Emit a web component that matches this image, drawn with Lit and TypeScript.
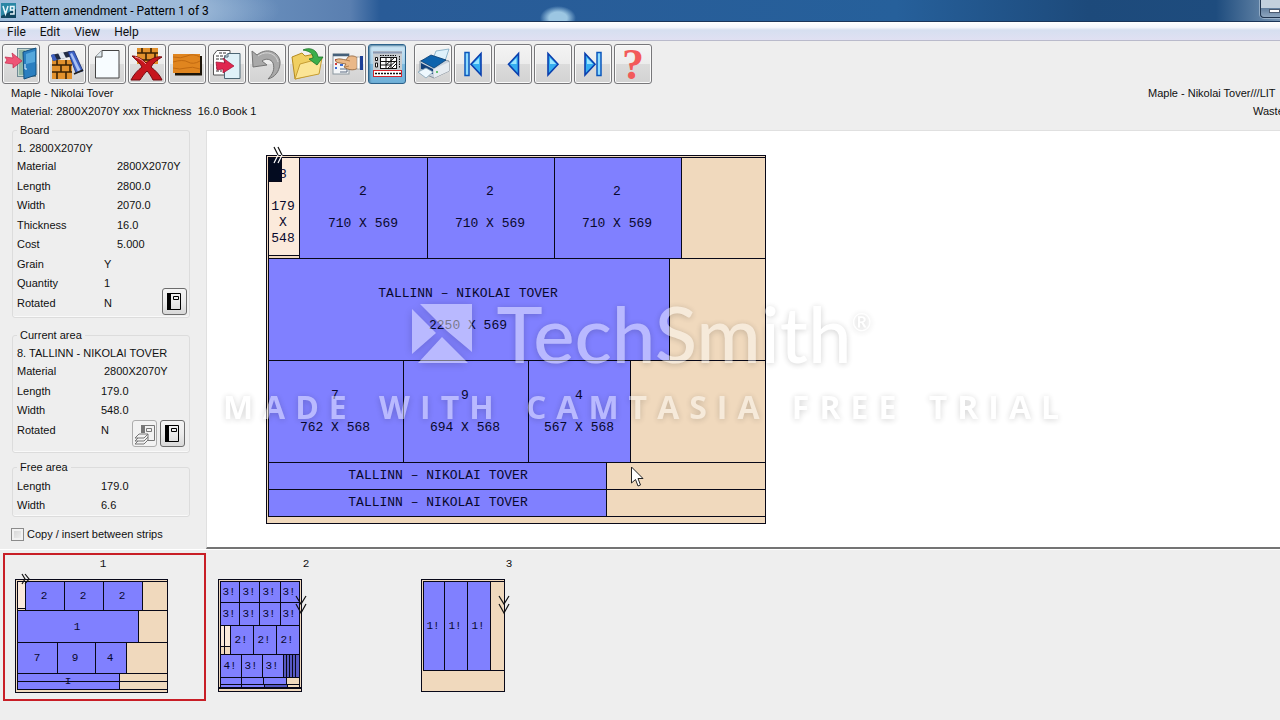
import { LitElement, html, svg, css, nothing } from "lit";
import { customElement, property, state } from "lit/decorators.js";

type Kind = "part" | "waste" | "offcut" | "strip" | "ink";
type Cell = [x: number, y: number, right: number, bottom: number, kind: Kind];
type Caption = [x: number, baseline: number, text: string];

interface Pattern {
  name: string;
  width: number;
  height: number;
  size: number;
  cells: Cell[];
  captions: Caption[];
  saw: string;
}

const detail: Pattern = {
  name: "Cutting pattern 1",
  width: 500,
  height: 369,
  size: 13,
  cells: [
    [0, 0, 499, 368, "waste"],
    [2, 2, 499, 361, "waste"],
    [2, 2, 33, 100, "offcut"],
    [2, 100, 33, 103, "waste"],
    [33, 2, 161, 103, "part"],
    [161, 2, 288, 103, "part"],
    [288, 2, 415, 103, "part"],
    [415, 2, 499, 103, "waste"],
    [2, 103, 403, 205, "part"],
    [403, 103, 499, 205, "waste"],
    [2, 205, 137, 307, "part"],
    [137, 205, 262, 307, "part"],
    [262, 205, 364, 307, "part"],
    [364, 205, 499, 307, "waste"],
    [2, 307, 340, 334, "part"],
    [340, 307, 499, 334, "waste"],
    [2, 334, 340, 361, "part"],
    [340, 334, 499, 361, "waste"],
    [2, 2, 15, 26, "ink"],
  ],
  captions: [
    [17, 23, "8"],
    [17, 55, "179"],
    [17, 71, "X"],
    [17, 87, "548"],
    [97, 40, "2"],
    [97, 72, "710 X 569"],
    [224, 40, "2"],
    [224, 72, "710 X 569"],
    [351, 40, "2"],
    [351, 72, "710 X 569"],
    [202, 142, "TALLINN – NIKOLAI TOVER"],
    [202, 174, "2250 X 569"],
    [69, 244, "7"],
    [69, 276, "762 X 568"],
    [199, 244, "9"],
    [199, 276, "694 X 568"],
    [313, 244, "4"],
    [313, 276, "567 X 568"],
    [172, 324, "TALLINN – NIKOLAI TOVER"],
    [172, 351, "TALLINN – NIKOLAI TOVER"],
  ],
  saw: "M8 -8l4 8M12 -8l4 8",
};

const thumbs: Pattern[] = [
  {
    name: "1",
    width: 153,
    height: 114,
    size: 11,
    cells: [
      [0, 0, 152, 113, "waste"],
      [2, 2, 152, 110, "waste"],
      [2, 2, 10, 29, "offcut"],
      [10, 2, 49, 31, "part"],
      [49, 2, 88, 31, "part"],
      [88, 2, 127, 31, "part"],
      [127, 2, 152, 31, "waste"],
      [2, 31, 123, 63, "part"],
      [123, 31, 152, 63, "waste"],
      [2, 63, 42, 94, "part"],
      [42, 63, 80, 94, "part"],
      [80, 63, 111, 94, "part"],
      [111, 63, 152, 94, "waste"],
      [2, 94, 104, 102, "part"],
      [104, 94, 152, 102, "waste"],
      [2, 102, 104, 110, "part"],
      [104, 102, 152, 110, "waste"],
    ],
    captions: [
      [29, 20, "2"],
      [68, 20, "2"],
      [107, 20, "2"],
      [62, 51, "1"],
      [22, 82, "7"],
      [60, 82, "9"],
      [95, 82, "4"],
      [53, 105, "ɪ"],
    ],
    saw: "M7 -5l3 5l-3 5M10 -5l4 5l-4 5",
  },
  {
    name: "2",
    width: 84,
    height: 113,
    size: 11,
    cells: [
      [0, 0, 83, 112, "waste"],
      [2, 2, 81, 109, "waste"],
      [2, 2, 21, 23, "part"],
      [21, 2, 41, 23, "part"],
      [41, 2, 62, 23, "part"],
      [62, 2, 81, 23, "part"],
      [2, 23, 21, 46, "part"],
      [21, 23, 41, 46, "part"],
      [41, 23, 62, 46, "part"],
      [62, 23, 81, 46, "part"],
      [2, 46, 6, 67, "offcut"],
      [6, 46, 12, 67, "offcut"],
      [2, 67, 6, 75, "waste"],
      [6, 67, 12, 75, "waste"],
      [12, 46, 35, 75, "part"],
      [35, 46, 58, 75, "part"],
      [58, 46, 81, 75, "part"],
      [2, 75, 23, 98, "part"],
      [23, 75, 44, 98, "part"],
      [44, 75, 65, 98, "part"],
      [65, 75, 68, 98, "strip"],
      [68, 75, 71, 98, "strip"],
      [71, 75, 74, 98, "strip"],
      [74, 75, 77, 98, "strip"],
      [77, 75, 81, 98, "strip"],
      [2, 98, 23, 105, "part"],
      [23, 98, 45, 105, "part"],
      [45, 98, 68, 105, "part"],
      [68, 98, 81, 105, "waste"],
      [2, 105, 23, 109, "part"],
      [23, 105, 46, 109, "part"],
      [46, 105, 69, 109, "strip"],
      [0, 108, 83, 109, "ink"],
    ],
    captions: [
      [11, 16, "3!"],
      [31, 16, "3!"],
      [51, 16, "3!"],
      [71, 16, "3!"],
      [11, 38, "3!"],
      [31, 38, "3!"],
      [51, 38, "3!"],
      [71, 38, "3!"],
      [23, 64, "2!"],
      [46, 64, "2!"],
      [69, 64, "2!"],
      [12, 90, "4!"],
      [33, 90, "3!"],
      [54, 90, "3!"],
    ],
    saw: "M78 17l5 8l5 -8M78 25l5 9l5 -9",
  },
  {
    name: "3",
    width: 84,
    height: 113,
    size: 11,
    cells: [
      [0, 0, 83, 112, "waste"],
      [2, 2, 83, 91, "waste"],
      [2, 2, 23, 91, "part"],
      [23, 2, 46, 91, "part"],
      [46, 2, 69, 91, "part"],
    ],
    captions: [
      [12, 50, "1!"],
      [34, 50, "1!"],
      [57, 50, "1!"],
    ],
    saw: "M78 17l5 8l5 -8M78 25l5 9l5 -9",
  },
];

@customElement("pattern-board")
class PatternBoard extends LitElement {
  @property({ attribute: false }) pattern!: Pattern;

  static styles = css`
    :host {
      display: block;
      line-height: 0;
    }
    svg {
      overflow: visible;
    }
    .cell {
      stroke: #080818;
      shape-rendering: crispEdges;
    }
    .part {
      fill: #8080ff;
    }
    .waste {
      fill: #f0d9bd;
    }
    .offcut {
      fill: #fbeadb;
    }
    .strip {
      fill: #5658c4;
    }
    .ink {
      fill: #030b20;
    }
    .caption {
      font-family: "Liberation Mono", monospace;
      text-anchor: middle;
      fill: #08082c;
      white-space: pre;
    }
    .saw {
      fill: none;
      stroke: #111;
      stroke-width: 1.2;
    }
    .light {
      stroke: #fff;
    }
  `;

  render() {
    const p = this.pattern;
    return html`<svg width=${p.width} height=${p.height} role="img" aria-label=${p.name}>
      ${p.cells.map(
        ([x, y, r, b, kind]) =>
          svg`<rect class="cell ${kind}" x=${x + 0.5} y=${y + 0.5} width=${r - x} height=${b - y}></rect>`
      )}
      ${p.captions.map(
        ([x, y, text]) => svg`<text class="caption" x=${x} y=${y} font-size=${p.size}>${text}</text>`
      )}
      <path class="saw" d=${p.saw}></path>
      ${p.size === 13 ? svg`<path class="saw light" d="M12 0l-4 8M16 0l-4 8"></path>` : nothing}
    </svg>`;
  }
}

const bricks = (x: number, y: number, w: number, h: number) => svg`
  <rect x=${x} y=${y} width=${w} height=${h} fill="#e2912d"></rect>
  <path d="M${x} ${y + 5}h${w}M${x} ${y + 12}h${w}M${x + 5} ${y}v5M${x + 14} ${y}v5M${x + 9} ${y + 5}v7M${x + 18} ${y + 5}v7M${x + 5} ${y + 12}v${h - 12}M${x + 14} ${y + 12}v${h - 12}" stroke="#3b2204" stroke-width="1.6" fill="none"></path>`;

const triangle = (d: string, shine: string) => svg`
  <path d=${d} fill="#35aef0" stroke="#0a3fae" stroke-width="1.600"></path>
  <path d=${shine} fill="#9be6ff"></path>`;

const icons: Record<string, unknown> = {
  exit: svg`
    <rect x="15.5" y="4.5" width="18" height="28" fill="#c5d6cd" stroke="#6f8a95"></rect>
    <path d="M17 6h6v25h-6z" fill="#8fb7a6"></path>
    <path d="M21 8L34 4V31L22 35z" fill="#2b7fc0" stroke="#13507f"></path>
    <path d="M24 10L33 7V18L24 20z" fill="#56a8dc"></path>
    <path d="M23 20v5h2" stroke="#e6f4ff" fill="none"></path>
    <path d="M3 13l8 1l-1 -5l10 8l-9 7v-4l-8 -1l2 -3z" fill="#ee5576" stroke="#c22848" stroke-width=".7"></path>`,
  cutting: svg`
    ${bricks(4, 16, 20, 19)}
    <path d="M3 11L22 7L25 12L5 17z" fill="#222c44"></path>
    <path d="M10 9l5 -1l3 6l-5 1z" fill="#dfe6f0"></path>
    <path d="M3 11l3 -1l3 6l-4 1z" fill="#3c5fc0"></path>
    <path d="M20 8L26 7L35 27L28 29z" fill="#3d62c8" stroke="#1b2f70" stroke-width=".8"></path>
    <path d="M24 9L33 27L30 28L22 10z" fill="#a9c1f4"></path>
    <path d="M26 30L35 26" stroke="#202020" stroke-width="1.4"></path>`,
  page: svg`
    <path d="M14 6.500H31V34H7.500V13z" fill="#f7fcff" stroke="#444"></path>
    <path d="M14 6.500V13H7.500" fill="#dfeaf0" stroke="#555"></path>`,
  remove: svg`
    ${bricks(9, 4, 21, 16)}
    <path d="M4 12C9 12 13 14 18 19C24 14 29 12 34 13C29 16 25 19 23 23C28 27 32 31 34 36H25C23 32 21 29 19 27C16 30 14 33 12 36H3C6 30 10 26 14 23C12 19 8 16 4 12z" fill="#c6151d" stroke="#730a10"></path>
    <path d="M7 13C12 14 15 17 18 20" stroke="#f4a0a0" fill="none"></path>`,
  board: svg`
    <rect x="7" y="12" width="27" height="19.500" fill="#1c1408"></rect>
    <rect x="5" y="10" width="27" height="19" fill="#e0851f"></rect>
    <path d="M5 13q8 2 14 -1t13 1M5 18q10 -3 15 0t12 -1M5 24q7 2 13 0t14 1" stroke="#c26a11" fill="none"></path>`,
  copy: svg`
    <path d="M9 6.500H22V31H5.500V11z" fill="#fff" stroke="#555"></path>
    <path d="M11 9h8M8 12h10M8 15h9M8 24h6M8 27h6M8 21h4" stroke="#333" stroke-dasharray="3 1"></path>
    <path d="M20 9.500H32V34.500H16.500V13z" fill="#dff1f8" stroke="#4c6674"></path>
    <path d="M20 9v4h-4" stroke="#4c6674" fill="none"></path>
    <path d="M8 18l9 1l-2 -5l11 8l-11 7v-4l-6 1z" fill="#e0274f" stroke="#9c1234" stroke-width=".7"></path>`,
  undo: svg`
    <path d="M4 7L9 11C20 2 33 9 32 20C31 28 27 33 20 35C25 30 27 25 25 19C23 15 18 14 14 17L19 21L5 23z" fill="#a9a9a9" stroke="#747474"></path>
    <path d="M10 12C18 6 28 9 30 18" stroke="#d8d8d8" fill="none"></path>`,
  open: svg`
    <path d="M4 13L14 9L17 12L27 10L31 29L7 35z" fill="#f0cf62" stroke="#b58b20"></path>
    <path d="M12 20L34 14L31 30L7 35z" fill="#fbe596" stroke="#c69d33"></path>
    <path d="M15 6C21 3 29 5 30 13H35L29 21L21 15L25 14C25 9 21 7 15 6z" fill="#3bae4b" stroke="#1a7227" stroke-width=".8"></path>`,
  pick: svg`
    <rect x="5" y="10" width="16" height="20" fill="#f4f6f8" stroke="#8c98a0"></rect>
    <path d="M5 11h16" stroke="#45607a" stroke-width="2.500"></path>
    <path d="M12 25h7v3h-7" stroke="#5a6a80" fill="none"></path>
    <path d="M7 16h2M7 20h2" stroke="#d23a3a" stroke-width="2"></path>
    <path d="M7 24h2M12 21h3" stroke="#3a6ad2" stroke-width="2"></path>
    <path d="M8 15.500C11 14 15 15.500 18 16L20 13C23 11 27 12 30 14V24C26 27 20 26 16 23L18 20L9 18.500C8 18 7 16.500 8 15.500z" fill="#eab888" stroke="#8a5a30" stroke-width=".8"></path>
    <path d="M18 16l4 1M17 23l4 -1" stroke="#a8713f" stroke-width=".8"></path>
    <path d="M29 13h3v12h-3z" fill="#fff" stroke="#777" stroke-width=".5"></path>
    <path d="M32 12h3v14h-3z" fill="#1d3f96"></path>`,
  layout: svg`
    <rect x="5" y="7" width="29" height="26" fill="#c8ccd0"></rect>
    <path d="M5 8.500h29" stroke="#8b9ab4" stroke-width="2"></path>
    <path d="M12 11.500h16M31.500 12v12" stroke="#111" stroke-dasharray="1.500 1"></path>
    <path d="M7.500 13.500h2v3h-2zM7.500 19h2v4h-2z" fill="#fff" stroke="#111"></path>
    <rect x="12.500" y="13.500" width="16" height="11" fill="#fff" stroke="#111"></rect>
    <path d="M18 13v12M23 13v12M12 17.500h16M12 21h11M18 21l8 -7M20 24l8 -7M24 24l4 -4" stroke="#111"></path>
    <rect x="5.500" y="26.500" width="28" height="6" fill="#fff" stroke="#d3252c"></rect>
    <path d="M7 29.500h26" stroke="#111" stroke-width="1.500" stroke-dasharray="2 1"></path>`,
  print: svg`
    <path d="M22 7L35 5L31 17L19 15z" fill="#dff1fb" stroke="#7ba7c0" stroke-width=".8"></path>
    <path d="M6 17L19 13L35 17V27L20 34L6 28z" fill="#c9d2dc" stroke="#76838f" stroke-width=".8"></path>
    <path d="M7 17L17 11L32 16L20 24z" fill="#0e63ad" stroke="#083d74" stroke-width=".8"></path>
    <path d="M7 19L19 25V30L7 25z" fill="#123f78"></path>
    <path d="M20 25L35 18V27L20 34z" fill="#e6ebf0"></path>
    <path d="M4 28L12 24L19 28L12 34z" fill="#eef8fe" stroke="#86a5b8" stroke-width=".8"></path>
    <circle cx="23" cy="28" r="1" fill="#3ab54a"></circle>`,
  first: svg`<rect x="11" y="8.500" width="4" height="23" fill="#8fdcff" stroke="#0a56bc" stroke-width="1.500"></rect>${triangle("M27 9.500V31L17 20.300z", "M25 14V20H19z")}`,
  previous: triangle("M24.500 9.500V31L14.500 20.300z", "M22.500 14V20H16.500z"),
  next: triangle("M14 9.500V31L24 20.300z", "M16 14V20H22z"),
  last: svg`${triangle("M11 9.500V31L21 20.300z", "M13 14V20H19z")}<rect x="23" y="8.500" width="4" height="23" fill="#8fdcff" stroke="#0a56bc" stroke-width="1.500"></rect>`,
  help: svg`<text class="mark" x="19" y="35" text-anchor="middle">?</text>`,
};

const groups: [string, string][][] = [
  [["exit", "Exit"]],
  [
    ["cutting", "Cutting patterns"],
    ["page", "New"],
    ["remove", "Delete pattern"],
    ["board", "Board"],
    ["copy", "Copy"],
    ["undo", "Undo"],
    ["open", "Open"],
    ["pick", "Select"],
    ["layout", "Thumbnails"],
  ],
  [
    ["print", "Print"],
    ["first", "First pattern"],
    ["previous", "Previous pattern"],
    ["next", "Next pattern"],
    ["last", "Last pattern"],
    ["help", "Help"],
  ],
];

const book = html`<svg width="17" height="20" viewBox="0 0 17 20" aria-hidden="true">
  <path d="M2 1.500h12.500v16H2z" fill="none" stroke="currentColor"></path>
  <path d="M1 1h4v17h-4z" fill="currentColor"></path>
  <path d="M7.500 4.500h5v3h-5z" fill="none" stroke="currentColor"></path>
</svg>`;

const books = html`<svg width="23" height="24" viewBox="0 0 23 24" aria-hidden="true">
  <path d="M8 3h4v8h-4z" fill="currentColor"></path>
  <path d="M10 3.500h11.500v15H14" fill="none" stroke="currentColor"></path>
  <path d="M13.500 6.500h5v3h-5zM2 16l4 -4h9l-4 4zM2 19l3 -3M2 19h9l4 -4v-3M2 22l3 -3M2 22h9l4 -4v-3" fill="none" stroke="currentColor"></path>
</svg>`;

@customElement("app-root")
class AppRoot extends LitElement {
  @state() selected = 0;

  static styles = css`
    :host {
      display: flex;
      flex-direction: column;
      position: relative;
      min-height: 100vh;
      overflow: hidden;
      background: #eeeeee;
      color: #101010;
      font: 11px/14px "Liberation Sans", sans-serif;
    }
    * {
      box-sizing: border-box;
    }
    button {
      font: inherit;
      color: inherit;
      margin: 0;
    }
    .title {
      display: flex;
      align-items: center;
      height: 22px;
      padding-left: 1px;
      gap: 5px;
      font: 12px/20px Roboto, sans-serif;
      color: #000;
      background:
        radial-gradient(ellipse 18px 12px at 558px 18px, #9cc6e2 50%, transparent),
        radial-gradient(ellipse 170px 40px at 110px 10px, #b3cbe3aa 50%, transparent),
        linear-gradient(90deg, #8db0d4, #6d93c0 220px, #5a7fb0 350px, #295b97 380px, #26609b 70%, #1d4a7b 85%, #1e4c7e 95%, #7794b2);
      border-bottom: 1px solid #1b3559;
    }
    .title h1 {
      flex: 1;
      margin: 0;
      font: inherit;
    }
    .minimise {
      display: flex;
      align-items: flex-end;
      align-self: flex-start;
      width: 20px;
      height: 18px;
      padding: 0 0 4px 8px;
      border: 1px solid #20344e;
      border-width: 0 0 1px 1px;
      border-radius: 0 0 0 4px;
      background: linear-gradient(#c3d0dd 50%, #64809f 50%, #8ea6bf);
      box-shadow: 0 0 0 1px #b9cbdd99;
    }
    .bar {
      width: 12px;
      height: 4px;
      background: #fff;
      border: 1px solid #4b5a70;
    }
    .menu {
      display: flex;
      height: 19px;
      border-bottom: 1px solid #b9bacb;
      background: linear-gradient(#fff, #f4f6fc 30%, #d6dff0 45%, #e0e0f2);
    }
    .menu button {
      padding: 0 7px;
      border: 0;
      background: none;
      font: 12px/20px Roboto, sans-serif;
    }
    .tools {
      display: flex;
      gap: 8px;
      padding: 3px 2px 0;
    }
    .group {
      display: flex;
      gap: 2px;
    }
    .tool {
      width: 38px;
      height: 40px;
      padding: 0;
      border: 1px solid #77777a;
      border-radius: 3px;
      background: linear-gradient(#f4f4f4, #ececec 49%, #dcdcdc 50%, #d2d2d2);
      box-shadow: inset 0 0 0 1px #fafafa;
    }
    .tool svg {
      display: block;
      overflow: visible;
    }
    .tool.on {
      border-color: #2c628b;
      background: linear-gradient(#cfe6f4, #a9d3ec 49%, #7fbbdf 50%, #6fb0d8);
      box-shadow: inset 1px 1px 2px #4d7f9f;
    }
    .mark {
      font: bold 44px "Liberation Serif", serif;
      fill: #f25a5a;
    }
    .info {
      display: flex;
      justify-content: space-between;
      padding-left: 11px;
      line-height: 18px;
      white-space: pre;
    }
    .info p {
      margin: 0;
    }
    .job {
      width: 132px;
      overflow: hidden;
    }
    .job .waste {
      padding-left: 105px;
    }
    .main {
      display: flex;
    }
    .side {
      flex: none;
      width: 206px;
      padding: 3px 16px 8px 12px;
    }
    fieldset {
      margin: 0;
      padding: 2px 2px 4px 4px;
      border: 1px solid #dcdcdc;
      border-radius: 3px;
      box-shadow: inset 0 -1px #f9f9f9;
    }
    legend {
      padding: 0 3px;
      height: 14px;
    }
    .current {
      margin-top: 10px;
      padding-bottom: 12px;
    }
    .free {
      margin-top: 7px;
      padding-bottom: 1px;
    }
    .name {
      line-height: 18px;
      white-space: nowrap;
    }
    .row {
      display: flex;
      height: 20px;
      line-height: 20px;
      white-space: nowrap;
    }
    .row:nth-of-type(even) {
      height: 19px;
      line-height: 19px;
    }
    .key {
      width: 84px;
    }
    .mid .key {
      width: 87px;
    }
    .far .key {
      width: 100px;
    }
    .books {
      display: flex;
      gap: 3px;
      margin-left: auto;
      padding-right: 2px;
    }
    .board .books {
      margin-top: -5px;
      padding-right: 0;
    }
    .book {
      display: grid;
      place-items: center;
      width: 25px;
      height: 27px;
      padding: 0;
      border: 1px solid #6c6c6c;
      border-radius: 3px;
      background: linear-gradient(#f4f4f4, #ececec 50%, #d8d8d8);
      color: #000;
    }
    .book:disabled {
      border-color: #adadad;
      background: #f2f2f2;
      color: #777;
    }
    .check {
      display: flex;
      align-items: center;
      gap: 3px;
      margin: 10px 0 0 -1px;
      white-space: nowrap;
    }
    .check input {
      appearance: none;
      width: 13px;
      height: 13px;
      margin: 0;
      border: 1px solid #8b8b8b;
      background: linear-gradient(135deg, #d2d2d2, #f4f4f4);
      box-shadow: inset 0 0 0 2px #f2f2f2;
    }
    .canvas {
      flex: 1;
      margin-top: 10px;
      padding: 24px 0 22px 59px;
      background: #fff;
      border: solid #e0e0e0;
      border-width: 1px 0 0 1px;
      border-bottom: 2px solid #747474;
      min-width: 0;
      overflow: hidden;
    }
    .strip {
      flex: 1;
      display: flex;
      align-items: flex-start;
      padding: 3px 0 19px 3px;
      border-top: 1px solid #fff;
    }
    .thumb {
      display: flex;
      flex-direction: column;
      justify-content: flex-start;
      width: 203px;
      height: 148px;
      padding: 2px 0 0 10px;
      border: 2px solid transparent;
      background: none;
      text-align: left;
    }
    .thumb.on {
      border-color: #c81e26;
    }
    .number {
      padding-right: 13px;
      margin-bottom: 8px;
      text-align: center;
      font: 11px/14px "Liberation Mono", monospace;
    }
    .cursor {
      position: absolute;
      left: 631px;
      top: 466px;
      pointer-events: none;
    }
    .watermark {
      position: absolute;
      inset: 0;
      display: flex;
      flex-direction: column;
      align-items: center;
      justify-content: center;
      padding-top: 2px;
      pointer-events: none;
      opacity: 0.45;
      color: #fff;
      white-space: nowrap;
      text-shadow: 0 1px 6px #0006;
    }
    .brand {
      display: flex;
      align-items: center;
      gap: 24px;
      padding-left: 4px;
      font: 500 78px/80px Lato, sans-serif;
    }
    .brand svg {
      filter: drop-shadow(0 1px 4px #0006);
    }
    .brand sup {
      font-size: 24px;
      line-height: 24px;
      vertical-align: 32px;
    }
    .trial {
      font: bold 32px/44px "Open Sans", sans-serif;
      letter-spacing: 10px;
      word-spacing: 4px;
      margin-top: 12px;
      padding-left: 12px;
    }
  `;

  private row(key: string, value: string, place = "", extra: unknown = nothing) {
    return html`<div class="row ${place}"><span class="key">${key}</span><span>${value}</span>${extra}</div>`;
  }

  render() {
    return html`
      <header class="title">
        <svg width="15" height="15" viewBox="0 0 15 15" aria-hidden="true">
          <rect width="15" height="15" fill="#10455f"></rect>
          <path d="M0 0h15v6L0 13z" fill="#2a86a5"></path>
          <path d="M2 3l2.500 8L7 3M13 7H9.500V3.500H13V11H9" fill="none" stroke="#e8f6fb" stroke-width="1.500"></path>
        </svg>
        <h1>Pattern amendment - Pattern 1 of 3</h1>
        <button class="minimise" aria-label="Minimise"><span class="bar"></span></button>
      </header>
      <nav class="menu">
        ${["File", "Edit", "View", "Help"].map((m) => html`<button>${m}</button>`)}
      </nav>
      <div class="tools">
        ${groups.map(
          (g) => html`<div class="group">
            ${g.map(
              ([id, label]) => html`<button class="tool ${id === "layout" ? "on" : ""}" aria-label=${label}>
                <svg width="36" height="38" viewBox="1 1 36 38" fill="none">${icons[id]}</svg>
              </button>`
            )}
          </div>`
        )}
      </div>
      <div class="info">
        <div><p>Maple - Nikolai Tover</p><p>Material: 2800X2070Y xxx Thickness  16.0 Book 1</p></div>
        <div class="job"><p>Maple - Nikolai Tover///LIT</p><p class="waste">Waste</p></div>
      </div>
      <div class="main">
        <aside class="side">
          <fieldset class="board">
            <legend>Board</legend>
            <div class="name">1. 2800X2070Y</div>
            ${this.row("Material", "2800X2070Y", "far")}
            ${this.row("Length", "2800.0", "far")}
            ${this.row("Width", "2070.0", "far")}
            ${this.row("Thickness", "16.0", "far")}
            ${this.row("Cost", "5.000", "far")}
            ${this.row("Grain", "Y", "mid")}
            ${this.row("Quantity", "1", "mid")}
            ${this.row("Rotated", "N", "mid", html`<span class="books"><button class="book" aria-label="Board library">${book}</button></span>`)}
          </fieldset>
          <fieldset class="current">
            <legend>Current area</legend>
            <div class="name">8. TALLINN - NIKOLAI TOVER</div>
            ${this.row("Material", "2800X2070Y", "mid")}
            ${this.row("Length", "179.0")}
            ${this.row("Width", "548.0")}
            ${this.row(
              "Rotated",
              "N",
              "",
              html`<span class="books">
                <button class="book" disabled aria-label="Part libraries">${books}</button>
                <button class="book" aria-label="Part library">${book}</button>
              </span>`
            )}
          </fieldset>
          <fieldset class="free">
            <legend>Free area</legend>
            ${this.row("Length", "179.0")}
            ${this.row("Width", "6.6")}
          </fieldset>
          <label class="check"><input type="checkbox" />Copy / insert between strips</label>
        </aside>
        <main class="canvas"><pattern-board .pattern=${detail}></pattern-board></main>
      </div>
      <section class="strip">
        ${thumbs.map(
          (p, i) => html`<button class="thumb ${i === this.selected ? "on" : ""}" @click=${() => (this.selected = i)}>
            <span class="number">${p.name}</span>
            <pattern-board .pattern=${p}></pattern-board>
          </button>`
        )}
      </section>
      <div class="watermark">
        <div class="brand">
          <svg width="60" height="59" viewBox="0 0 60 59" fill="#fff" aria-hidden="true">
            <path d="M8 0H60V48L35 27z"></path>
            <path d="M0 5L24 29L0 50z"></path>
            <path d="M30 33L56 59H6z"></path>
          </svg>
          <span>TechSmith<sup>®</sup></span>
        </div>
        <div class="trial">MADE WITH CAMTASIA FREE TRIAL</div>
      </div>
      <svg class="cursor" width="13" height="21" viewBox="0 0 13 21" aria-hidden="true">
        <path d="M.500 1V17L4.500 13.500L7 20L9.500 19L7 12.500H12z" fill="#fff" stroke="#222"></path>
      </svg>
    `;
  }
}
